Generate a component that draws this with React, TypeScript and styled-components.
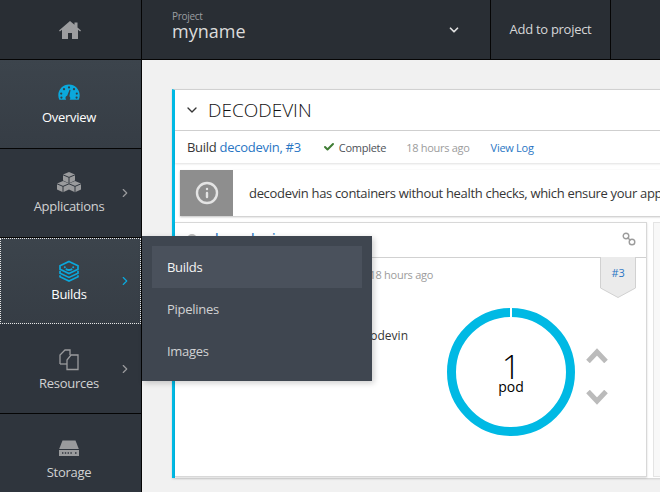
import React from "react";
import styled, { createGlobalStyle } from "styled-components";
import { ChevronRight, ChevronDown, Check, Info } from "lucide-react";

const GlobalStyle = createGlobalStyle`
  html, body {
    margin: 0;
    padding: 0;
    background: #f1f1f1;
  }
  * {
    box-sizing: border-box;
  }
`;

const Shell = styled.div`
  position: relative;
  display: grid;
  grid-template-columns: 142px 1fr;
  grid-template-rows: 60px 1fr;
  width: 660px;
  height: 492px;
  overflow: hidden;
  font-family: "Open Sans", "Liberation Sans", sans-serif;
  letter-spacing: -0.28px;
`;

const HomeCell = styled.div`
  display: flex;
  align-items: center;
  justify-content: center;
  padding-right: 2px;
  background: #292e34;
  border-right: 1px solid #050505;
  border-bottom: 1px solid #050505;
  color: #9c9d9f;
`;

const TopBar = styled.div`
  display: flex;
  background: #292e34;
  border-bottom: 1px solid #050505;
`;

const ProjectPicker = styled.div`
  display: flex;
  align-items: center;
  justify-content: space-between;
  width: 349px;
  padding: 0 29px 0 30px;
  border-right: 1px solid #050505;
`;

const ProjectInfo = styled.div`
  padding-bottom: 10px;
`;

const ProjectLabel = styled.div`
  font-size: 10px;
  line-height: 12px;
  color: #9c9ea1;
`;

const ProjectName = styled.div`
  font-size: 18px;
  line-height: 18px;
  letter-spacing: 0;
  color: #dcdcdc;
`;

const AddButton = styled.div`
  display: flex;
  align-items: center;
  justify-content: center;
  width: 120px;
  padding-bottom: 1px;
  border-right: 1px solid #050505;
  font-size: 13px;
  color: #d6d7d8;
`;

const Sidebar = styled.nav`
  display: flex;
  flex-direction: column;
  background: #2f353d;
  border-right: 1px solid #050505;
`;

const NavItem = styled.div<{ $h: number; $low?: boolean; $active?: boolean; $focus?: boolean }>`
  position: relative;
  display: flex;
  flex-direction: column;
  align-items: center;
  justify-content: center;
  gap: 3px;
  flex: none;
  height: ${(p) => p.$h}px;
  padding: ${(p) => (p.$low ? "2px" : "0")} 3px 0 0;
  color: ${(p) => (p.$active ? "#fff" : "#d1d2d3")};
  background: ${(p) =>
    p.$active ? "linear-gradient(#3c444c, #363d45)" : "#2f353d"};
  border-bottom: 1px solid #050505;
  font-size: 13px;
  line-height: 18px;
  ${(p) => p.$focus && "outline: 1px dotted #e8e8e8; outline-offset: -1px; border-bottom: 0; margin-bottom: 1px;"}
`;

const NavIcon = styled.svg<{ $accent?: boolean }>`
  width: 22px;
  height: 22px;
  color: ${(p) => (p.$accent ? "#0ba8dc" : "#9a9b9d")};
`;

const NavArrow = styled(ChevronRight)<{ $accent?: boolean }>`
  position: absolute;
  right: 9px;
  top: 50%;
  margin-top: -7px;
  width: 14px;
  height: 14px;
  color: ${(p) => (p.$accent ? "#0ba8dc" : "#9a9b9d")};
`;

const Flyout = styled.div`
  position: absolute;
  left: 142px;
  top: 236px;
  width: 230px;
  height: 145px;
  padding: 10px;
  background: #3f4650;
  box-shadow: 2px 2px 6px rgba(0, 0, 0, 0.2);
  z-index: 5;
`;

const FlyoutItem = styled.div<{ $active?: boolean }>`
  display: flex;
  align-items: center;
  height: 42px;
  padding-left: 15px;
  font-size: 13px;
  color: ${(p) => (p.$active ? "#f4f4f4" : "#d1d2d3")};
  background: ${(p) => (p.$active ? "#4a515c" : "transparent")};
`;

const Content = styled.main`
  padding: 29px 0 0 30px;
  background: #f1f1f1;
  overflow: hidden;
`;

const AppCard = styled.section`
  width: 520px;
  height: 389px;
  background: #fff;
  border-left: 3px solid #00b9e4;
  border-top: 1px solid #d1d1d1;
  box-shadow: 0 1px 2px rgba(0, 0, 0, 0.15);
  color: #363636;
`;

const TitleRow = styled.div`
  display: flex;
  align-items: center;
  gap: 8px;
  height: 41px;
  padding-left: 9px;
  border-bottom: 1px solid #d1d1d1;
  font-size: 19px;
  font-weight: 300;
  letter-spacing: 0;
  color: #111;
`;

const BuildRow = styled.div`
  display: flex;
  align-items: center;
  height: 32px;
  padding-left: 12px;
  font-size: 13px;
  box-shadow: 0 1px 2px rgba(0, 0, 0, 0.12);
`;

const Link = styled.span`
  color: #2a76c4;
`;

const Status = styled.span`
  display: flex;
  align-items: center;
  gap: 4px;
  margin-left: 22px;
  font-size: 11px;
  color: #4d5258;
`;

const Muted = styled.span<{ $ml?: number }>`
  margin-left: ${(p) => p.$ml ?? 0}px;
  font-size: 11px;
  color: #9c9c9c;
`;

const SmallLink = styled(Link)`
  margin-left: 21px;
  font-size: 11px;
`;

const Alert = styled.div`
  display: flex;
  align-items: center;
  height: 46px;
  margin: 7px 0 6px 5px;
  background: #fff;
  box-shadow: 0 1px 2px rgba(0, 0, 0, 0.25);
  font-size: 13px;
  letter-spacing: -0.32px;
  white-space: nowrap;
  overflow: hidden;
`;

const AlertIcon = styled.div`
  display: flex;
  align-items: center;
  justify-content: center;
  flex: none;
  width: 53px;
  height: 46px;
  margin-right: 16px;
  background: #8e8e8e;
  color: #e4e4e4;
`;

const CardRow = styled.div`
  display: flex;
  gap: 6px;
`;

const DeployCard = styled.div`
  position: relative;
  flex: none;
  width: 472px;
  height: 255px;
  background: #fff;
  border: 1px solid #d8d8d8;
  border-left: 0;
  box-shadow: 0 1px 2px rgba(0, 0, 0, 0.15);
`;

const EmptyCard = styled.div`
  flex: 1;
  height: 255px;
  background: #f8f8f8;
  border: 1px solid #e4e4e4;
`;

const DeployHeader = styled.div`
  display: flex;
  align-items: center;
  justify-content: space-between;
  height: 35px;
  padding: 0 10px 2px 12px;
  border-bottom: 1px solid #d1d1d1;
`;

const DeployName = styled.div`
  display: flex;
  align-items: center;
  gap: 12px;
  font-size: 16px;
  letter-spacing: 0;
`;

const StatusDot = styled.span`
  width: 10px;
  height: 10px;
  border-radius: 50%;
  background: #bdbdbd;
`;

const DeployBody = styled.div`
  display: grid;
  grid-template-columns: 266px 1fr;
`;

const DeployText = styled.div`
  padding-left: 12px;
`;

const Created = styled.div`
  margin-top: 8px;
  padding-right: 8px;
  text-align: right;
  line-height: 15px;
`;

const Owner = styled.div`
  margin-top: 46px;
  font-size: 12px;
  line-height: 16px;
  letter-spacing: 0;
  color: #363636;
  text-align: right;
  padding-right: 33px;
`;

const Scale = styled.div`
  position: relative;
  display: flex;
  align-items: center;
  gap: 10px;
  padding: 49px 0 0 5px;
`;

const Badge = styled.svg`
  position: absolute;
  top: -1px;
  right: 10px;
  width: 36px;
  height: 41px;
`;

const BadgeText = styled.span`
  position: absolute;
  top: 7px;
  right: 10px;
  width: 36px;
  text-align: center;
  font-size: 11px;
  color: #2a76c4;
`;

const Donut = styled.div`
  position: relative;
  width: 130px;
  height: 130px;
`;

const DonutLabel = styled.div`
  position: absolute;
  inset: 0;
  display: flex;
  flex-direction: column;
  align-items: center;
  justify-content: center;
  color: #000;
`;

const DonutCount = styled.div`
  font-size: 33px;
  font-weight: 300;
  line-height: 26px;
  margin-top: 3px;
`;

const DonutUnit = styled.div`
  font-size: 14px;
  line-height: 14px;
  letter-spacing: 0;
`;

const Steppers = styled.div`
  display: flex;
  flex-direction: column;
  gap: 27px;
  margin-top: 9px;
`;

const HomeIcon = () => (
  <svg width="22" height="18" viewBox="0 0 22 18" fill="currentColor">
    <path d="M11 0L0 9.5l.9 1L3 8.7V18h6v-6h4v6h6V8.7l2.1 1.8.9-1L18.5 6.4V1.5h-3v2.3z" />
  </svg>
);

const GaugeIcon = () => (
  <NavIcon $accent viewBox="0 0 22 22" fill="currentColor">
    <path
      fillRule="evenodd"
      d="M11 1.5C5.2 1.5.3 6.2.3 12.2c0 1.6.3 3.2 1 4.5h6.9c-.5-.5-.8-1.2-.7-2 .1-.9.8-1.6 1.7-1.9l2.3-6 1 .3-1.1 6.2c.6.5 1 1.3.8 2.1-.1.5-.3 1-.7 1.3h9.2c.7-1.3 1-2.9 1-4.5 0-6-4.9-10.7-10.7-10.7Z"
    />
    <circle cx="11" cy="4.4" r="1.1" fill="#363d45" />
    <circle cx="6" cy="6.2" r="1.1" fill="#363d45" />
    <circle cx="16" cy="6.2" r="1.1" fill="#363d45" />
    <circle cx="3.2" cy="10.6" r="1.1" fill="#363d45" />
    <circle cx="18.8" cy="10.6" r="1.1" fill="#363d45" />
    <circle cx="3.4" cy="14.6" r="1.1" fill="#363d45" />
    <circle cx="18.6" cy="14.6" r="1.1" fill="#363d45" />
  </NavIcon>
);

const CubesIcon = () => (
  <NavIcon viewBox="0 0 26 22" style={{ width: 26 }} fill="currentColor">
    <path d="M13 0l6 2.6v6L13 11.2 7 8.6v-6z" />
    <path d="M7 9l6 2.6v6L7 20.2l-6-2.6v-6z" />
    <path d="M19 9l6 2.6v6l-6 2.6-6-2.6v-6z" />
    <path d="M7 2.8l6 2.6 6-2.6M13 5.4v5.6M1 11.8l6 2.6 6-2.6M7 14.4v5.6M13 11.8l6 2.6 6-2.6M19 14.4v5.6" stroke="#2f353d" strokeWidth="1" fill="none" />
  </NavIcon>
);

const LayersIcon = () => (
  <NavIcon $accent viewBox="0 0 22 22" fill="none" stroke="currentColor" strokeWidth="1.7">
    <path d="M11 1.5l9 4.2v3.6l-9 4.2-9-4.2V5.7z" />
    <path d="M2 10.8v2.4l9 4.2 9-4.2v-2.4" />
    <path d="M2 15.2v1.6l9 4.2 9-4.2v-1.6" />
    <path d="M6.8 7.2h.01M15.2 7.2h.01M8.5 9.4c1.5.8 3.5.8 5 0" strokeWidth="2" strokeLinecap="round" />
  </NavIcon>
);

const FilesIcon = () => (
  <NavIcon viewBox="0 0 22 22" fill="none" stroke="currentColor" strokeWidth="1.3">
    <path d="M2 15V6l5-5h5v5" />
    <path d="M9 20.5V11l4-5h7v14.5z" fill="#2f353d" />
    <path d="M2 15h7" />
  </NavIcon>
);

const StorageIcon = () => (
  <NavIcon viewBox="0 0 22 22" fill="currentColor">
    <path d="M4.5 2.5h13L20.8 11H1.2z" />
    <rect x="1" y="12" width="20" height="6" />
    <path d="M4 15h1.4M6.8 15h1.4M9.6 15h1.4M12.4 15h1.4M17 15h1.5" stroke="#2f353d" strokeWidth="1.3" />
  </NavIcon>
);

const ChainIcon = () => (
  <svg width="14" height="14" viewBox="0 0 14 14" fill="none" stroke="#9c9c9c" strokeWidth="1.4">
    <circle cx="4" cy="4" r="2.8" />
    <circle cx="10" cy="10" r="2.8" />
    <path d="M5.5 5.5l3 3" />
  </svg>
);

const StepChevron = ({ up }: { up?: boolean }) => (
  <svg width="22" height="15" viewBox="0 0 22 15" fill="none" stroke="#bbbbbb" strokeWidth="5">
    <path d={up ? "M2 13.5L11 4l9 9.5" : "M2 1.5L11 11l9-9.5"} />
  </svg>
);

function App() {
  return (
    <>
      <GlobalStyle />
      <Shell>
        <HomeCell>
          <HomeIcon />
        </HomeCell>
        <TopBar>
          <ProjectPicker>
            <ProjectInfo>
              <ProjectLabel>Project</ProjectLabel>
              <ProjectName>myname</ProjectName>
            </ProjectInfo>
            <ChevronDown size={14} color="#e0e0e0" strokeWidth={3} />
          </ProjectPicker>
          <AddButton>Add to project</AddButton>
        </TopBar>
        <Sidebar>
          <NavItem $h={89} $active>
            <GaugeIcon />
            Overview
          </NavItem>
          <NavItem $h={89}>
            <CubesIcon />
            Applications
            <NavArrow />
          </NavItem>
          <NavItem $h={86} $active $focus>
            <LayersIcon />
            Builds
            <NavArrow $accent />
          </NavItem>
          <NavItem $h={89} $low>
            <FilesIcon />
            Resources
            <NavArrow />
          </NavItem>
          <NavItem $h={89} $low>
            <StorageIcon />
            Storage
          </NavItem>
        </Sidebar>
        <Content>
          <AppCard>
            <TitleRow>
              <ChevronDown size={16} color="#363636" />
              DECODEVIN
            </TitleRow>
            <BuildRow>
              Build&nbsp;<Link>decodevin, #3</Link>
              <Status>
                <Check size={12} color="#3f7d34" strokeWidth={4} />
                Complete
              </Status>
              <Muted $ml={20}>18 hours ago</Muted>
              <SmallLink>View Log</SmallLink>
            </BuildRow>
            <Alert>
              <AlertIcon>
                <Info size={24} strokeWidth={2.4} />
              </AlertIcon>
              decodevin has containers without health checks, which ensure your application is running correctly.
            </Alert>
            <CardRow>
              <DeployCard>
                <DeployHeader>
                  <DeployName>
                    <StatusDot />
                    <Link>decodevin</Link>
                  </DeployName>
                  <ChainIcon />
                </DeployHeader>
                <DeployBody>
                  <DeployText>
                    <Created>
                      <Muted>created 18 hours ago</Muted>
                    </Created>
                    <Owner>decodevin</Owner>
                  </DeployText>
                  <Scale>
                    <Badge viewBox="0 0 36 41">
                      <path d="M.5 0v31L18 40.5 35.5 31V0" fill="#ebebeb" stroke="#d1d1d1" />
                    </Badge>
                    <BadgeText>#3</BadgeText>
                    <Donut>
                      <svg width="130" height="130" viewBox="0 0 130 130">
                        <circle cx="65" cy="65" r="59.5" fill="none" stroke="#00b9e4" strokeWidth="9" />
                        <rect x="64" y="0" width="2" height="11" fill="#fff" />
                      </svg>
                      <DonutLabel>
                        <DonutCount>1</DonutCount>
                        <DonutUnit>pod</DonutUnit>
                      </DonutLabel>
                    </Donut>
                    <Steppers>
                      <StepChevron up />
                      <StepChevron />
                    </Steppers>
                  </Scale>
                </DeployBody>
              </DeployCard>
              <EmptyCard />
            </CardRow>
          </AppCard>
        </Content>
        <Flyout>
          <FlyoutItem $active>Builds</FlyoutItem>
          <FlyoutItem>Pipelines</FlyoutItem>
          <FlyoutItem>Images</FlyoutItem>
        </Flyout>
      </Shell>
    </>
  );
}

export default App;
